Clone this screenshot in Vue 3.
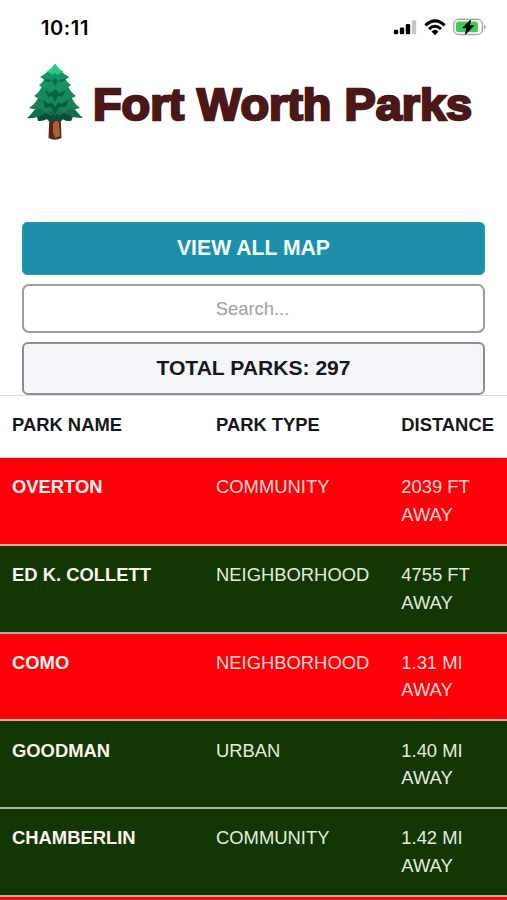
<template>
  <main class="pantalla">
    <header class="status-bar">
      <span class="hora">10:11</span>
      <div class="status-icons">
        <svg class="signal" width="24" height="16" viewBox="0 0 24 16">
          <rect x="0.8" y="10.8" width="4.4" height="4.4" rx="1.2" />
          <rect x="6.8" y="8.6" width="4.4" height="6.6" rx="1.2" />
          <rect x="12.8" y="5.1" width="4.4" height="10.1" rx="1.2" />
          <rect x="18.8" y="1.2" width="4.4" height="14" rx="1.2" fill="#c4c4c4" />
        </svg>
        <svg class="wifi" width="22" height="17" viewBox="0 0 22 17" fill="none" stroke="#000" stroke-width="3">
          <path d="M1.4 6.3Q11 -2.6 20.6 6.3" />
          <path d="M5 10.1Q11 4.5 17 10.1" />
          <path d="M7.5 12.5Q11 9.2 14.5 12.5L11 16.2Z" fill="#000" stroke="none" />
        </svg>
        <svg class="battery" width="34" height="18" viewBox="0 0 34 18">
          <rect x="0.8" y="1.3" width="28.6" height="15.2" rx="4.8" fill="#fff" stroke="#a9a9a9" stroke-width="1.4" />
          <rect x="3" y="3.5" width="22" height="10.8" rx="2.6" fill="#3ecb5c" />
          <path d="M31 6.4Q34.4 8.9 31 11.4Z" fill="#a0a0a0" />
          <path d="M17.6 2L9.8 9.8H14L12.4 16.2L20.6 7.8H16.2Z" fill="#000" stroke="#000" stroke-width="1" stroke-linejoin="round" />
        </svg>
      </div>
    </header>

    <div class="logo">
      <svg class="tree" width="58" height="80" viewBox="0 0 58 80">
        <path d="M23.5 50H34.5L35.5 75Q29 78.5 22.5 75Z" fill="#5a2418" />
        <path d="M27 61Q30 55 33 60L34 73L29 75L27 69Z" fill="#a9603f" />
        <!-- ramas, de abajo hacia arriba -->
        <path d="M14 38H44Q49 48 57 55Q51 55 47 54L45 58Q39 58 37 56L34 59L29 56L24 59L21 56Q17 58 12 58L11 54Q6 56 1 55Q9 48 14 38Z" fill="#12704d" />
        <path d="M12 54L20 50L25 53L29 49L33 53L38 50L46 54L45 58Q39 58 37 56L34 59L29 56L24 59L21 56Q17 58 12 58Z" fill="#07513a" />
        <path d="M14 30H44Q47 40 54 45Q48 47 43 46L38 50L33 47L29 53L25 47L20 50L15 46Q9 47 3 45Q11 40 14 30Z" fill="#168056" />
        <path d="M17 37L23 41L29 38L35 41L42 37L40 44L33 44L29 52L25 44L19 45Z" fill="#0a5c40" />
        <path d="M17 21H41Q44 29 50 33Q46 36 41 36L37 40L33 38L29 44L25 38L21 40L16 36Q12 36 8 33Q14 29 17 21Z" fill="#168a5c" />
        <path d="M19 27L24 30L29 26L34 30L40 27L36 34L32 33L29 39L26 33L22 34Z" fill="#0b6345" />
        <path d="M20 12H38Q40 19 45 22Q41 26 37 25L33 29L29 26L25 29L21 25Q17 26 13 22Q18 19 20 12Z" fill="#17935f" />
        <path d="M15 14L22 12L36 12L43 14L36 19L32 18L29 23L26 18L21 19Z" fill="#0b6c4a" />
        <path d="M29 1Q34 9 43 14Q39 17 35 16L32 18L29 15L26 18L22 16Q18 17 14 14Q23 9 29 1Z" fill="#149461" />
        <path d="M29 0.5Q32 6 38 9L34 10L32 12L29 10L26 12L24 10L20 9Q26 6 29 0.5Z" fill="#25cb80" />
      </svg>
      <svg class="titulo" width="390" height="64" viewBox="0 0 390 64">
        <text x="3" y="47" textLength="379" lengthAdjust="spacingAndGlyphs">Fort Worth Parks</text>
      </svg>
    </div>

    <div class="controles">
      <button class="view-map">VIEW ALL MAP</button>
      <input class="search" type="text" placeholder="Search..." />
      <div class="total">TOTAL PARKS: 297</div>
    </div>

    <table>
      <thead>
        <tr>
          <th class="col-name">PARK NAME</th>
          <th class="col-type">PARK TYPE</th>
          <th>DISTANCE</th>
        </tr>
      </thead>
      <tbody>
        <tr v-for="park in parks" :key="park.name" :class="park.color">
          <td class="park-name">{{ park.name }}</td>
          <td>{{ park.type }}</td>
          <td>{{ park.distance }}<br v-if="park.distance" />{{ park.distance ? 'AWAY' : '' }}</td>
        </tr>
      </tbody>
    </table>
  </main>
</template>

<script setup>
const parks = [
  { name: 'OVERTON', type: 'COMMUNITY', distance: '2039 FT', color: 'red' },
  { name: 'ED K. COLLETT', type: 'NEIGHBORHOOD', distance: '4755 FT', color: 'green' },
  { name: 'COMO', type: 'NEIGHBORHOOD', distance: '1.31 MI', color: 'red' },
  { name: 'GOODMAN', type: 'URBAN', distance: '1.40 MI', color: 'green' },
  { name: 'CHAMBERLIN', type: 'COMMUNITY', distance: '1.42 MI', color: 'green' },
  { name: '', type: '', distance: '', color: 'red' }
];
</script>

<style>
html,
body {
  margin: 0;
  overflow: hidden;
}
</style>

<style scoped>
* {
  box-sizing: border-box;
}

.pantalla {
  width: 507px;
  height: 900px;
  overflow: hidden;
  background-color: #fff;
  color: #16181b;
  font-family: "Liberation Sans", Arial, sans-serif;
}

.status-bar {
  display: flex;
  justify-content: space-between;
  align-items: center;
  height: 54px;
  padding: 0 20px 0 41px;
}

.hora {
  padding-top: 1px;
  font-family: Inter, sans-serif;
  font-size: 20px;
  font-weight: 600;
  letter-spacing: 0.6px;
  color: #000;
}

.status-icons {
  display: flex;
  align-items: center;
  gap: 7px;
}

.logo {
  display: flex;
  align-items: center;
  height: 96px;
  padding-left: 26px;
}

.tree {
  margin-top: 1px;
}

.titulo {
  margin-left: 6px;
  margin-top: 6px;
  overflow: visible;
}

.titulo text {
  font-size: 44.5px;
  font-weight: bold;
  fill: #4b1817;
  stroke: #4b1817;
  stroke-width: 2.4px;
}

.controles {
  display: flex;
  flex-direction: column;
  gap: 9px;
  margin-top: 72px;
  padding: 0 22px;
}

.view-map {
  height: 53px;
  padding: 0 0 2px;
  border: 1px solid #2b9bb2;
  border-radius: 5px;
  background-color: #1c90aa;
  color: #f4fcfd;
  font-family: inherit;
  font-size: 21.2px;
  font-weight: bold;
}

.search {
  height: 49px;
  padding: 0 2px 0 0;
  border: 2px solid #9c9c9e;
  border-radius: 7px;
  background-color: #fff;
  font-family: inherit;
  font-size: 18.4px;
  text-align: center;
}

.search::placeholder {
  color: #a0a0a0;
}

.total {
  height: 53px;
  border: 2px solid #8c8e91;
  border-radius: 6px;
  background-color: #f5f6f9;
  font-size: 21.1px;
  font-weight: bold;
  line-height: 48px;
  text-align: center;
}

table {
  width: 100%;
  table-layout: fixed;
  border-collapse: separate;
  border-spacing: 0;
  border-top: 1px solid #dee2e6;
  font-size: 18.4px;
  line-height: 27.65px;
}

.col-name {
  width: 204px;
}

.col-type {
  width: 185.3px;
}

th,
td {
  padding: 15.3px 0 0 12px;
  text-align: left;
  vertical-align: top;
  white-space: nowrap;
}

th {
  height: 62px;
  border-bottom: 1px solid #dee2e6;
}

td {
  height: 87.75px;
  border-bottom: 2px solid rgba(222, 230, 222, 0.72);
}

.red td {
  background-color: #fe0008;
  color: #ffd9d9;
}

.green td {
  background-color: #123703;
  color: #e3ecdf;
}

td.park-name {
  font-weight: bold;
  color: #fff4f2;
}
</style>
